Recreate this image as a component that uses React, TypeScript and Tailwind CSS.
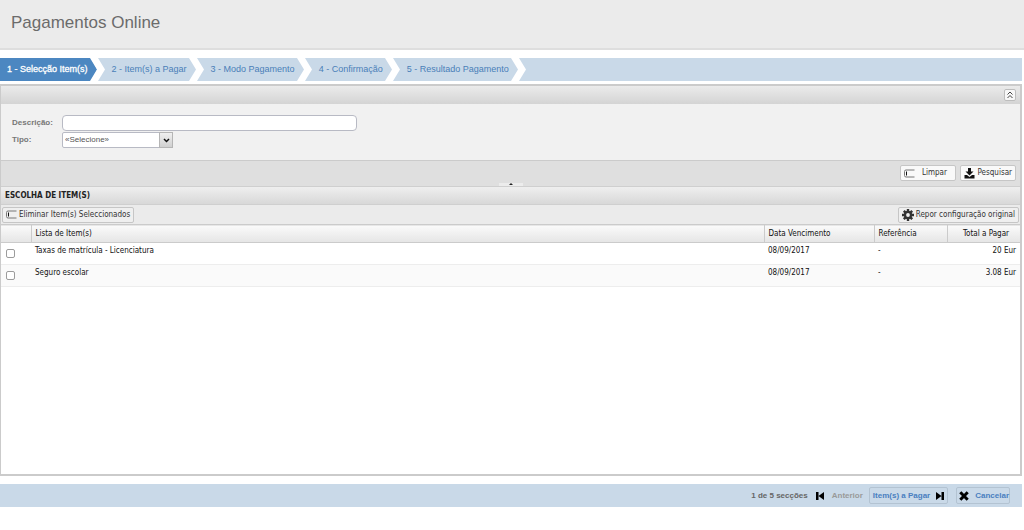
import type { ReactNode } from "react";

const steps = [
  "1 - Selecção Item(s)",
  "2 - Item(s) a Pagar",
  "3 - Modo Pagamento",
  "4 - Confirmação",
  "5 - Resultado Pagamento",
];

const items = [
  { name: "Taxas de matrícula - Licenciatura", due: "08/09/2017", ref: "-", total: "20 Eur" },
  { name: "Seguro escolar", due: "08/09/2017", ref: "-", total: "3.08 Eur" },
];

function Chevron({ active }: { active: boolean }) {
  return (
    <svg width="15" height="23" viewBox="0 0 15 23" className="shrink-0">
      {active && <path d="M0 0H1L7 11.500L1 23H0Z" fill="#4c87c1" />}
      <path d="M0 0H8L15 11.500L8 23H0L7 11.500Z" fill="#fff" />
    </svg>
  );
}

function FieldIcon() {
  return (
    <svg width="11" height="9" viewBox="0 0 11 9" fill="none">
      <path d="M10.5 1H2Q.5 1 .5 2.500V6.500Q.5 8 2 8H10.500" stroke="#777" />
      <path d="M2.500 2.500V6.500" stroke="#111" />
    </svg>
  );
}

function DownloadIcon() {
  return (
    <svg width="11" height="11" viewBox="0 0 11 11" fill="#111">
      <path d="M4 0H7V3.500H9.500L5.500 7.500L1.500 3.500H4Z" />
      <path d="M.5 7H3L5.500 9L8 7H10.500V10.500H.5Z" />
    </svg>
  );
}

function GearIcon() {
  return (
    <svg width="12" height="12" viewBox="0 0 12 12">
      <g stroke="#333" strokeWidth="2.400">
        <path d="M6 0V12M0 6H12M1.800 1.800L10.200 10.200M10.200 1.800L1.800 10.200" />
      </g>
      <circle cx="6" cy="6" r="4.200" fill="#333" />
      <circle cx="6" cy="6" r="1.900" fill="#efefef" />
    </svg>
  );
}

function SkipIcon({ forward = false }: { forward?: boolean }) {
  return (
    <svg width="8" height="8" viewBox="0 0 8 8" fill="#000">
      {forward ? (
        <path d="M0 0L5.500 4L0 8ZM5.500 0H8V8H5.500Z" />
      ) : (
        <path d="M8 0L2.500 4L8 8ZM0 0H2.500V8H0Z" />
      )}
    </svg>
  );
}

function CrossIcon() {
  return (
    <svg width="10" height="10" viewBox="0 0 10 10">
      <path d="M1.300 1.300L8.700 8.700M8.700 1.300L1.300 8.700" stroke="#000" strokeWidth="3" />
    </svg>
  );
}

function ToolButton({ className, children }: { className: string; children: ReactNode }) {
  return (
    <button
      type="button"
      className={`flex h-4 items-center whitespace-nowrap rounded-xs border border-[#c6c6c6] text-[#333] ${className}`}
    >
      {children}
    </button>
  );
}

export default function App() {
  return (
    <div className="flex min-h-screen flex-col bg-white pb-[23px] font-['DejaVu_Sans_Condensed','DejaVu_Sans',sans-serif] text-[8px] leading-3 text-[#111]">
      <header className="flex h-[50px] items-center border-b-2 border-[#dedede] bg-[#ebebeb] px-[11px] pb-0.5">
        <h1 className="font-['Liberation_Sans',sans-serif] text-[17px] leading-6 text-[#6b6b6b]">
          Pagamentos Online
        </h1>
      </header>

      {/* Passos */}
      <nav className="mr-0.5 mt-2 bg-[#c9d9e8] font-['Liberation_Sans',sans-serif] text-[9px] text-[#4a7fb8]">
        <ol className="flex h-[23px] overflow-hidden">
          {steps.map((step, i) => (
            <li key={step} className="flex">
              <a
                href="#"
                aria-current={i === 0 ? "step" : undefined}
                className={`flex items-center whitespace-nowrap pb-px pl-[7px] pr-[2px] ${
                  i === 0 ? "bg-[#4c87c1] text-white [-webkit-text-stroke:0.3px_white]" : ""
                }`}
              >
                {step}
              </a>
              <Chevron active={i === 0} />
            </li>
          ))}
        </ol>
      </nav>

      <main className="mr-0.5 mt-[3px] flex flex-1 flex-col border-2 border-l border-[#cbcbcb]">
        {/* Pesquisa */}
        <div className="flex h-[18px] items-center justify-end bg-linear-to-b from-[#ebebeb] to-[#d4d4d4] px-1">
          <button
            type="button"
            aria-label="Recolher"
            className="flex h-3 w-3 items-center justify-center rounded-xs border border-[#bdbdbd] bg-[#f7f7f7]"
          >
            <svg width="6" height="8" viewBox="0 0 6 8" fill="none" stroke="#444">
              <path d="M.5 3.500L3 1L5.500 3.500M.5 7L3 4.500L5.500 7" />
            </svg>
          </button>
        </div>

        <form className="bg-[#f1f1f1] font-['Liberation_Sans',sans-serif]">
          <div className="flex h-[57px] flex-col gap-px border-b border-[#cbcbcb] px-[11px] pt-[11px]">
            <div className="flex items-center">
              <label htmlFor="descricao" className="w-[50px] font-bold text-[#777]">
                Descrição:
              </label>
              <input
                id="descricao"
                type="text"
                className="h-4 w-[295px] rounded-sm border border-[#b8bac4] bg-white px-1 text-[#555]"
              />
            </div>
            <div className="flex items-center">
              <label htmlFor="tipo" className="w-[50px] font-bold text-[#777]">
                Tipo:
              </label>
              <div className="relative">
                <select
                  id="tipo"
                  className="block h-4 w-[111px] appearance-none rounded-xs border border-[#b8bac4] bg-white pl-0.5 pr-4 text-[#555]"
                >
                  <option>«Selecione»</option>
                </select>
                <span className="pointer-events-none absolute inset-y-0 right-0 flex w-[14px] items-center justify-center border border-[#b5b5b5] bg-linear-to-b from-[#f0f0f0] to-[#d0d0d0]">
                  <svg width="7" height="5" viewBox="0 0 7 5" fill="none">
                    <path d="M1 1L3.500 3.500L6 1" stroke="#111" strokeWidth="1.500" />
                  </svg>
                </span>
              </div>
            </div>
          </div>
          <div className="relative flex h-[25px] items-center justify-end gap-1 bg-[#dfdfdf] px-1 pb-px font-['DejaVu_Sans_Condensed','DejaVu_Sans',sans-serif]">
            <ToolButton className="w-14 justify-between bg-[#f9f9f9] pl-[3px] pr-2">
              <FieldIcon />
              Limpar
            </ToolButton>
            <ToolButton className="w-14 justify-between bg-[#f9f9f9] px-[3px]">
              <DownloadIcon />
              Pesquisar
            </ToolButton>
            <span className="absolute bottom-0 left-1/2 flex h-[3px] w-6 -translate-x-1/2 justify-center bg-[#ececec]">
              <svg width="4" height="2" viewBox="0 0 4 2">
                <path d="M0 2L2 0L4 2Z" fill="#222" />
              </svg>
            </span>
          </div>
        </form>

        {/* Lista de itens */}
        <h2 className="flex h-[19px] items-center border-y border-[#cfcfcf] bg-linear-to-b from-[#efefef] to-[#d8d8d8] px-1 font-bold text-[#222]">
          ESCOLHA DE ITEM(S)
        </h2>
        <div className="flex h-[19px] items-center justify-between bg-[#ebebeb] px-px">
          <ToolButton className="gap-0.5 bg-[#efefef] px-[3px]">
            <FieldIcon />
            Eliminar Item(s) Seleccionados
          </ToolButton>
          <ToolButton className="gap-0.5 bg-[#efefef] px-[3px]">
            <GearIcon />
            Repor configuração original
          </ToolButton>
        </div>

        <table className="w-full table-fixed border-collapse text-left">
          <colgroup>
            <col className="w-[30px]" />
            <col />
            <col className="w-[110px]" />
            <col className="w-[73px]" />
            <col className="w-[73px]" />
          </colgroup>
          <thead>
            <tr className="h-[18px] border-y border-[#cbcbcb] bg-linear-to-b from-[#fafafa] to-[#e6e6e6]">
              <th aria-label="Seleccionar" />
              <th className="border-l border-[#cbcbcb] px-1 font-normal">Lista de Item(s)</th>
              <th className="border-l border-[#cbcbcb] px-1 font-normal">Data Vencimento</th>
              <th className="border-l border-[#cbcbcb] px-1 font-normal">Referência</th>
              <th className="border-l border-[#cbcbcb] pr-[11px] text-right font-normal">Total a Pagar</th>
            </tr>
          </thead>
          <tbody>
            {items.map((item) => (
              <tr key={item.name} className="h-[22px] border-b border-[#ededed] align-top even:bg-[#fafafa]">
                <td className="pl-[5px] pt-[6px]">
                  <input
                    type="checkbox"
                    aria-label={item.name}
                    className="block h-[9px] w-[9px] appearance-none rounded-xs border border-[#9c9c9c] bg-white checked:bg-[#4c87c1]"
                  />
                </td>
                <td className="px-1 pt-0.5">{item.name}</td>
                <td className="px-1 pt-0.5">{item.due}</td>
                <td className="px-1 pt-0.5">{item.ref}</td>
                <td className="pr-1 pt-0.5 text-right">{item.total}</td>
              </tr>
            ))}
          </tbody>
        </table>
      </main>

      {/* Navegação */}
      <footer className="mr-0.5 mt-2 flex h-[23px] items-center justify-end bg-[#c9d9e8] pr-3 font-['Liberation_Sans',sans-serif] font-bold">
        <span className="mr-2 text-[#666]">1 de 5 secções</span>
        <button type="button" disabled className="mr-1.5 flex h-4 items-center gap-2 text-[#999]">
          <SkipIcon />
          Anterior
        </button>
        <button
          type="button"
          className="mr-2 flex h-[17px] items-center gap-1.5 rounded-xs border border-[#b3c3d2] px-[3px] text-[#4a7fc0]"
        >
          Item(s) a Pagar
          <SkipIcon forward />
        </button>
        <button
          type="button"
          className="flex h-[17px] items-center gap-1.5 rounded-xs border border-[#b3c3d2] pl-0.5 text-[#4a7fc0]"
        >
          <CrossIcon />
          Cancelar
        </button>
      </footer>
    </div>
  );
}
